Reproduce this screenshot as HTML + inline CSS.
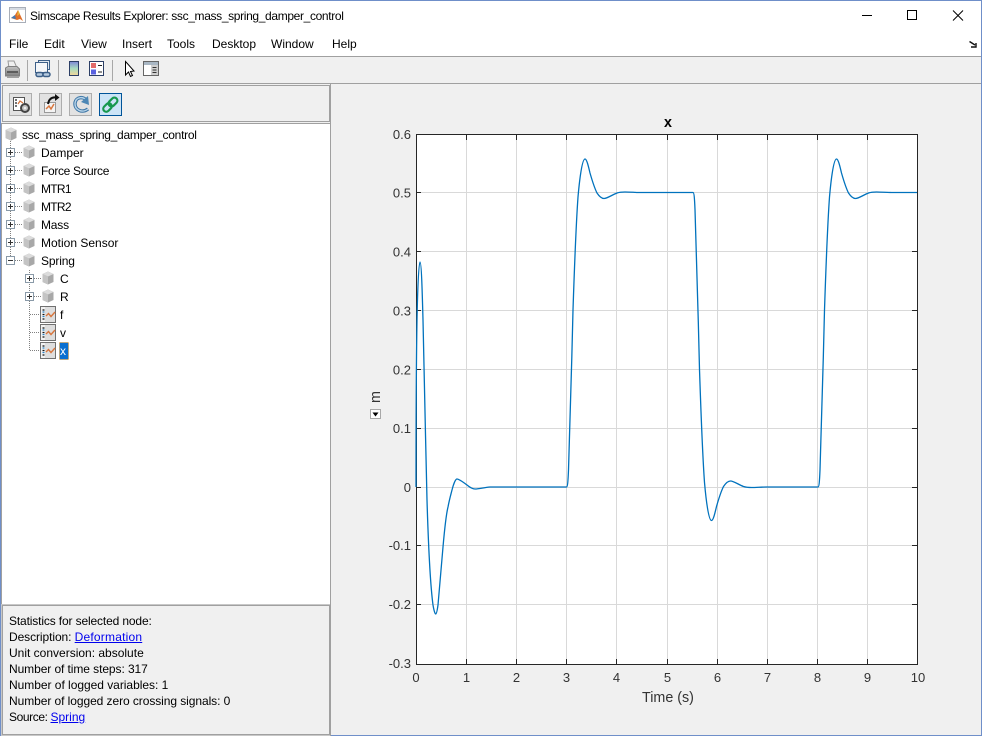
<!DOCTYPE html>
<html><head><meta charset="utf-8"><style>
html,body{margin:0;padding:0;width:982px;height:736px;overflow:hidden;background:#f0f0f0}
body{position:relative;font-family:"Liberation Sans",sans-serif;font-size:12px;color:#000}
.a{position:absolute;white-space:nowrap}
.t{position:absolute;white-space:nowrap;line-height:16px;height:16px}
a{color:#0000ee;text-decoration:underline}
</style></head><body>
<div class="a" style="left:0;top:0;width:982px;height:56px;background:#fff"></div>
<div class="a" style="left:0;top:56px;width:982px;height:1px;background:#a0a0a0"></div>
<div class="a" style="left:0;top:83px;width:982px;height:1px;background:#a0a0a0"></div>

<div class="t" style="left:30px;top:8px;letter-spacing:-.35px">Simscape Results Explorer: ssc_mass_spring_damper_control</div>
<div class="t" style="left:9px;top:36px">File</div>
<div class="t" style="left:44px;top:36px">Edit</div>
<div class="t" style="left:81px;top:36px">View</div>
<div class="t" style="left:122px;top:36px">Insert</div>
<div class="t" style="left:167px;top:36px">Tools</div>
<div class="t" style="left:212px;top:36px">Desktop</div>
<div class="t" style="left:271px;top:36px">Window</div>
<div class="t" style="left:332px;top:36px">Help</div>

<svg class="a" style="left:0;top:0" width="982" height="736" viewBox="0 0 982 736">
<defs>
<g id="cube">
<path d="M6 0.5 L11.500 3 V11 L6 13.500 L0.500 11 V3 Z" fill="#a8a8a8"/>
<path d="M6 0.500 L11.500 3 L6 5.500 L0.500 3 Z" fill="#dcdcdc"/>
<path d="M0.500 3 L6 5.500 V13.500 L0.500 11 Z" fill="#c4c4c4"/>
</g>
<g id="plus"><rect x=".5" y=".5" width="8" height="8" fill="#fff" stroke="#8a9aa8"/><path d="M2 4.500H7M4.500 2V7" stroke="#333"/></g>
<g id="minus"><rect x=".5" y=".5" width="8" height="8" fill="#fff" stroke="#8a9aa8"/><path d="M2 4.500H7" stroke="#333"/></g>
<g id="sig">
<rect x=".5" y=".5" width="15" height="16" fill="#dedede" stroke="#707070"/>
<rect x="1" y="1" width="4" height="15" fill="#f2f2f2"/>
<path d="M2.500 4H4.500M2.500 8.500H4.500M2.500 13H4.500" stroke="#111" stroke-width="1.300"/>
<path d="M2.500 6H4.500M2.500 10.500H4.500" stroke="#2a7fc0" stroke-width="1.200"/>
<path d="M6 10 L8.500 7.500 L11 10.500 L15 6" fill="none" stroke="#d8763e" stroke-width="1.400"/>
</g>
<linearGradient id="cb" x1="0" y1="0" x2="0" y2="1"><stop offset="0" stop-color="#7d87d6"/><stop offset=".5" stop-color="#a8dcc0"/><stop offset="1" stop-color="#f3d79a"/></linearGradient>
<linearGradient id="pr" x1="0" y1="0" x2="0" y2="1"><stop offset="0" stop-color="#c4c4c4"/><stop offset="1" stop-color="#7c7c7c"/></linearGradient>
</defs>

<!-- window border -->
<rect x="0" y="0" width="982" height="1" fill="#6f8fc9"/>
<rect x="0" y="0" width="1" height="736" fill="#6f8fc9"/>
<rect x="981" y="0" width="1" height="736" fill="#6f8fc9"/>
<rect x="0" y="735" width="982" height="1" fill="#6f8fc9"/>

<!-- title icon -->
<rect x="9.500" y="7.500" width="16" height="15" fill="#d6dbe2" stroke="#a8aeb8"/>
<rect x="10" y="10" width="15" height="12" fill="#fff"/>
<path d="M11 18 L15 15 L18 10 L23 21 L20 19 L17 20 Z" fill="#e0702a"/>
<path d="M11 18 L15 15 L16 19 Z" fill="#3f79b8"/>
<path d="M18 10 L20 14 L17 16 Z" fill="#e8b33a"/>

<!-- window controls -->
<rect x="862" y="15" width="10" height="1" fill="#000"/>
<rect x="907.500" y="10.500" width="9" height="9" fill="none" stroke="#000"/>
<path d="M953 10.500 L963 20.500 M963 10.500 L953 20.500" stroke="#000" stroke-width="1" fill="none"/>
<path d="M969.500 41.500 L975 45 M971 47 H976 V43" stroke="#111" stroke-width="1.400" fill="none"/>

<!-- toolbar -->
<g>
<path d="M8 61 H14 L17 68 H9 Z" fill="#f0f0f0" stroke="#9a9a9a"/>
<path d="M5.500 68 L8 66.500 H17 L19.500 69 V76 H5.500 Z" fill="url(#pr)" stroke="#808080"/>
<rect x="7" y="71" width="11" height="2" fill="#5c5c5c"/>
<rect x="7" y="76" width="12" height="2" fill="#a0a0a0"/>
</g>
<rect x="27" y="60" width="1" height="21" fill="#a8a8a8"/>
<g fill="none" stroke="#3c5f88">
<rect x="38.500" y="60.500" width="11" height="9" fill="#dfe7f0"/>
<rect x="35.500" y="62.500" width="12" height="10" fill="#f4f6f9"/>
<rect x="36" y="72.500" width="7" height="4" rx="2" stroke-width="1.500" fill="#b7cbe0"/>
<rect x="43" y="72.500" width="7" height="4" rx="2" stroke-width="1.500" fill="#b7cbe0"/>
</g>
<rect x="58" y="60" width="1" height="21" fill="#a8a8a8"/>
<rect x="69.500" y="61.500" width="9" height="14" fill="url(#cb)" stroke="#2c3f66"/>
<rect x="89.500" y="61.500" width="14" height="14" fill="#fff" stroke="#2c3f66"/>
<rect x="91" y="63" width="5" height="5" fill="#e26b6b"/><rect x="91" y="69.500" width="5" height="5" fill="#5a62e0"/>
<path d="M98 65.500H102M98 72H102" stroke="#222"/>
<rect x="112" y="60" width="1" height="21" fill="#a8a8a8"/>
<path d="M125.500 61.500 V75 L128.500 72 L130.500 76.500 L132.500 75.500 L130.500 71.500 L134 71 Z" fill="#fff" stroke="#000"/>
<rect x="143.500" y="61.500" width="15" height="14" fill="#fff" stroke="#666"/>
<rect x="144" y="62" width="14" height="3" fill="#a9b7c4"/>
<rect x="151" y="65" width="7" height="10" fill="#cfcfcf"/>
<path d="M152.500 67.500H156.500M152.500 70H156.500M152.500 72.500H156.500" stroke="#333"/>

<!-- button panel -->
<rect x="2.500" y="85.500" width="327" height="36" fill="#f0f0f0" stroke="#a0a0a0"/>
<rect x="9.500" y="93.500" width="22" height="22" fill="#e2e2e2" stroke="#adadad"/>
<rect x="39.500" y="93.500" width="22" height="22" fill="#e2e2e2" stroke="#adadad"/>
<rect x="69.500" y="93.500" width="22" height="22" fill="#e2e2e2" stroke="#adadad"/>
<rect x="99.500" y="93.500" width="22" height="22" fill="#cce4f7" stroke="#005499"/>
<!-- button 1 -->
<rect x="13.500" y="97.500" width="11" height="13" fill="#fff" stroke="#555"/>
<path d="M15 100H17M15 103H17M15 106H17" stroke="#222" stroke-width="1.300"/>
<path d="M18 104 L20 101 L23 103" stroke="#d8763e" fill="none" stroke-width="1.300"/>
<circle cx="25" cy="108" r="4" fill="#c0c0c0" stroke="#444" stroke-width="2"/><circle cx="25" cy="108" r="1.300" fill="#eee"/>
<!-- button 2 -->
<rect x="44.500" y="102.500" width="11" height="10" fill="#f4f4f4" stroke="#999"/>
<path d="M46 109 L49 106 L51 109 L54 104" fill="none" stroke="#d8763e" stroke-width="1.500"/>
<path d="M48 104 C49 99 52 97 56 97.500" fill="none" stroke="#111" stroke-width="2"/>
<path d="M55 94 L59.500 97.500 L55 101 Z" fill="#111"/>
<!-- button 3 -->
<path d="M87 101 C84 96 76 96.500 75 103 C74.500 110 82 113.500 88 109" fill="none" stroke="#3d76a6" stroke-width="3.400"/>
<path d="M87 101 C84 96 76 96.500 75 103 C74.500 110 82 113.500 88 109" fill="none" stroke="#b7d3e8" stroke-width="1.400"/>
<path d="M89 105 L81 102 L88 96 Z" fill="#4d87b5"/>
<!-- button 4 link -->
<g fill="none" stroke="#17984e" stroke-width="2.200" transform="rotate(-45 110.500 104.500)">
<rect x="101.500" y="101.500" width="9.500" height="6" rx="3"/>
<rect x="109" y="101.500" width="10" height="6" rx="3"/>
</g>

<!-- tree panel -->
<rect x="1.500" y="123.500" width="329" height="481" fill="#fff" stroke="#a0a0a0"/>
<!-- stats panel -->
<rect x="2.500" y="605.500" width="327" height="129" fill="#f0f0f0" stroke="#a0a0a0"/>
<rect x="1.500" y="604.500" width="329" height="131" fill="none" stroke="#c8c8c8"/>
<rect x="330" y="84" width="1" height="652" fill="#a0a0a0"/>

<!-- tree lines -->
<g stroke="#808080" stroke-dasharray="1 1" fill="none">
<path d="M10.500 141V261"/>
<path d="M29.500 270V297M29.500 297V350"/>
<path d="M15 152.500H23M15 170.500H23M15 188.500H23M15 206.500H23M15 224.500H23M15 242.500H23M15 260.500H23"/>
<path d="M34 278.500H42M34 296.500H42M30 314.500H40M30 332.500H40M30 350.500H40"/>
</g>
<use href="#cube" x="5" y="127"/>
<use href="#cube" x="23" y="145"/><use href="#cube" x="23" y="163"/><use href="#cube" x="23" y="181"/><use href="#cube" x="23" y="199"/><use href="#cube" x="23" y="217"/><use href="#cube" x="23" y="235"/><use href="#cube" x="23" y="253"/>
<use href="#cube" x="42" y="271"/><use href="#cube" x="42" y="289"/>
<use href="#plus" x="6" y="148"/><use href="#plus" x="6" y="166"/><use href="#plus" x="6" y="184"/><use href="#plus" x="6" y="202"/><use href="#plus" x="6" y="220"/><use href="#plus" x="6" y="238"/><use href="#minus" x="6" y="256"/>
<use href="#plus" x="25" y="274"/><use href="#plus" x="25" y="292"/>
<use href="#sig" x="40" y="306"/><use href="#sig" x="40" y="324"/><use href="#sig" x="40" y="342"/>
<rect x="59.500" y="342.500" width="9" height="17" fill="#0a6fd0" stroke="#f09a20" stroke-dasharray="1 1"/>

<!-- axes -->
<rect x="416" y="134.500" width="502" height="530" fill="#fff"/>
<g stroke="#d9d9d9" stroke-width="1" fill="none">
<path d="M466.500 135V664M516.500 135V664M566.500 135V664M616.500 135V664M667.500 135V664M717.500 135V664M767.500 135V664M817.500 135V664M867.500 135V664"/>
<path d="M416 192.500H918M416 251.500H918M416 310.500H918M416 369.500H918M416 428.500H918M416 487.500H918M416 545.500H918M416 604.500H918"/>
</g>
<path d="M416.500 664.500V134.500H917.500V664.500Z" fill="none" stroke="#262626"/>
<g stroke="#262626" fill="none">
<path d="M466.500 664V659M516.500 664V659M566.500 664V659M616.500 664V659M667.500 664V659M717.500 664V659M767.500 664V659M817.500 664V659M867.500 664V659"/>
<path d="M466.500 135V140M516.500 135V140M566.500 135V140M616.500 135V140M667.500 135V140M717.500 135V140M767.500 135V140M817.500 135V140M867.500 135V140"/>
<path d="M416 192.500H421M416 251.500H421M416 310.500H421M416 369.500H421M416 428.500H421M416 487.500H421M416 545.500H421M416 604.500H421"/>
<path d="M917 192.500H912M917 251.500H912M917 310.500H912M917 369.500H912M917 428.500H912M917 487.500H912M917 545.500H912M917 604.500H912"/>
</g>
<path fill="none" stroke="#0072bd" stroke-width="1.300" stroke-linejoin="round" d="M416 487 C416 450 416 380 417 320 C417.500 295 418.500 262 420 262 C421.500 262 422.300 295 423 320 C424 360 425.500 440 427 500 C428.500 550 431 590 433 605 C434 611 435 614 435.700 614 C436.500 614 437.300 610 438 605 C439.300 590 441 570 443 547 C444.500 530 446 515 448 507 C449.500 499 451 494 452 490 C453.500 484 455.500 479 457 479 C459 479 463 482 467 485 C470 487.500 473 489 475 489 C479 489 484 487.500 490 487 L566.500 487 C567.500 487 568 482 568.500 470 C569.500 450 571.500 370 573 310 C574 280 576 225 578 197 C579.500 180 582 159 585 159 C587 159 589 169 590 173 C592 180 595 189 597 193 C599 196 601.500 198.500 604 198.500 C607 198.500 612 195 617 193 C620 192 623 192 625 192 C630 192 636 192.500 640 192.500 L693 192.500 C694 192.500 694.500 197.500 695 209.500 C696 229.500 698 309.500 699.500 369.500 C700.500 399.500 702.500 454.500 704.500 482.500 C706 499.500 708.500 520.500 711.500 520.500 C713.500 520.500 715.500 510.500 716.500 506.500 C718.500 499.500 721.500 490.500 723.500 486.500 C725.500 483.500 728 481 730.500 481 C733.500 481 738.500 484.500 743.500 486.500 C746.500 487.500 749.500 487.500 751.500 487.500 C756 487.500 762 487 766.500 487 L818 487 C819 487 819.500 482 820 470 C821 450 823 370 824.500 310 C825.500 280 827.500 225 829.500 197 C831 180 833.500 159 836.500 159 C838.500 159 840.500 169 841.500 173 C843.500 180 846.500 189 848.500 193 C850.500 196 853 198.500 855.500 198.500 C858.500 198.500 863.500 195 868.500 193 C871.500 192 874.500 192 876.500 192 C881 192 887 192.500 891.500 192.500 L917 192.500"/>

<!-- ylabel dropdown -->
<rect x="370.500" y="409.500" width="10" height="9" fill="#fff" stroke="#a8a8a8"/>
<path d="M372.500 412.500H378.500L375.500 416.500Z" fill="#000"/>
<g fill="#333" font-family="Liberation Sans, sans-serif" font-size="13">
<g text-anchor="end">
<text x="411" y="139">0.6</text><text x="411" y="197.500">0.5</text><text x="411" y="256.500">0.4</text><text x="411" y="315.500">0.3</text><text x="411" y="374.500">0.2</text><text x="411" y="433">0.1</text><text x="411" y="492">0</text><text x="411" y="550">-0.1</text><text x="411" y="609">-0.2</text><text x="411" y="668">-0.3</text>
</g>
<g text-anchor="middle">
<text x="416" y="682">0</text><text x="466.500" y="682">1</text><text x="516.500" y="682">2</text><text x="566.500" y="682">3</text><text x="616.500" y="682">4</text><text x="667.500" y="682">5</text><text x="717.500" y="682">6</text><text x="767.500" y="682">7</text><text x="817.500" y="682">8</text><text x="867.500" y="682">9</text><text x="918" y="682">10</text>
<text x="668" y="702" font-size="14.300">Time (s)</text>
<text x="668" y="127" font-size="14.300" font-weight="bold" fill="#000">x</text>
<text transform="translate(380 397) rotate(-90)" font-size="14.300">m</text>
</g>
</g>
</svg>

<div class="t" style="left:22px;top:127px;letter-spacing:-.27px">ssc_mass_spring_damper_control</div>
<div class="t" style="left:41px;top:145px">Damper</div>
<div class="t" style="left:41px;top:163px;letter-spacing:-.33px">Force Source</div>
<div class="t" style="left:41px;top:181px;letter-spacing:-.7px">MTR1</div>
<div class="t" style="left:41px;top:199px;letter-spacing:-.7px">MTR2</div>
<div class="t" style="left:41px;top:217px;letter-spacing:-.2px">Mass</div>
<div class="t" style="left:41px;top:235px">Motion Sensor</div>
<div class="t" style="left:41px;top:253px;letter-spacing:-.15px">Spring</div>
<div class="t" style="left:60px;top:271px">C</div>
<div class="t" style="left:60px;top:289px">R</div>
<div class="t" style="left:60px;top:307px">f</div>
<div class="t" style="left:60px;top:325px">v</div>
<div class="t" style="left:60px;top:343px;color:#fff">x</div>

<div class="t" style="left:9px;top:613px;letter-spacing:-.14px">Statistics for selected node:</div>
<div class="t" style="left:9px;top:629px;letter-spacing:-.08px">Description: <a style="letter-spacing:.2px">Deformation</a></div>
<div class="t" style="left:9px;top:645px">Unit conversion: absolute</div>
<div class="t" style="left:9px;top:661px;letter-spacing:-.08px">Number of time steps: 317</div>
<div class="t" style="left:9px;top:677px;letter-spacing:-.03px">Number of logged variables: 1</div>
<div class="t" style="left:9px;top:693px;letter-spacing:-.07px">Number of logged zero crossing signals: 0</div>
<div class="t" style="left:9px;top:709px;letter-spacing:-.4px">Source: <a style="letter-spacing:0">Spring</a></div>
</body></html>
